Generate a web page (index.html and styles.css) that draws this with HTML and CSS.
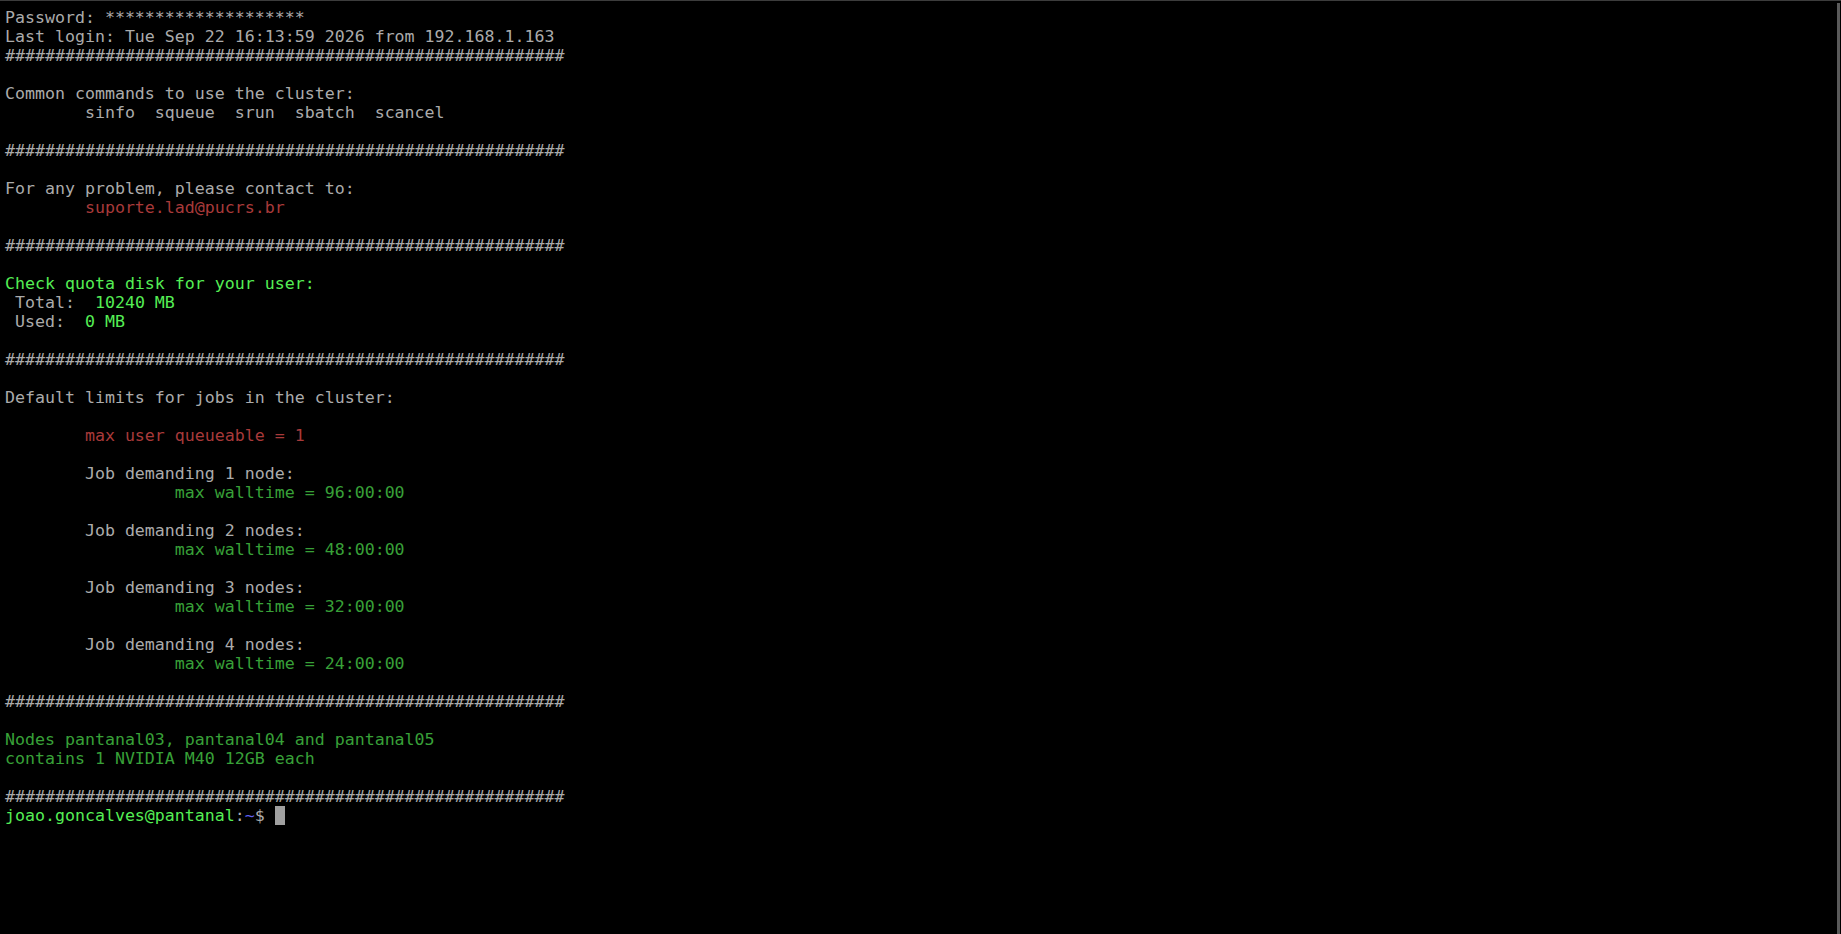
FILE: index.html
```html
<!DOCTYPE html>
<html>
<head>
<meta charset="utf-8">
<link rel="stylesheet" href="styles.css">
</head>
<body>
<div class="window">
<div class="term">
<div class="ln">Password: ********************</div>
<div class="ln">Last login: Tue Sep 22 16:13:59 2026 from 192.168.1.163</div>
<div class="ln">########################################################</div>
<div class="ln"></div>
<div class="ln">Common commands to use the cluster:</div>
<div class="ln">        sinfo  squeue  srun  sbatch  scancel</div>
<div class="ln"></div>
<div class="ln">########################################################</div>
<div class="ln"></div>
<div class="ln">For any problem, please contact to:</div>
<div class="ln red">        suporte.lad@pucrs.br</div>
<div class="ln"></div>
<div class="ln">########################################################</div>
<div class="ln"></div>
<div class="ln bgreen">Check quota disk for your user:</div>
<div class="ln"> Total:  <span class="bgreen">10240 MB</span></div>
<div class="ln"> Used:  <span class="bgreen">0 MB</span></div>
<div class="ln"></div>
<div class="ln">########################################################</div>
<div class="ln"></div>
<div class="ln">Default limits for jobs in the cluster:</div>
<div class="ln"></div>
<div class="ln red">        max user queueable = 1</div>
<div class="ln"></div>
<div class="ln">        Job demanding 1 node:</div>
<div class="ln green">                 max walltime = 96:00:00</div>
<div class="ln"></div>
<div class="ln">        Job demanding 2 nodes:</div>
<div class="ln green">                 max walltime = 48:00:00</div>
<div class="ln"></div>
<div class="ln">        Job demanding 3 nodes:</div>
<div class="ln green">                 max walltime = 32:00:00</div>
<div class="ln"></div>
<div class="ln">        Job demanding 4 nodes:</div>
<div class="ln green">                 max walltime = 24:00:00</div>
<div class="ln"></div>
<div class="ln">########################################################</div>
<div class="ln"></div>
<div class="ln green">Nodes pantanal03, pantanal04 and pantanal05</div>
<div class="ln green">contains 1 NVIDIA M40 12GB each</div>
<div class="ln"></div>
<div class="ln">########################################################</div>
<div class="ln"><span class="bgreen">joao.goncalves@pantanal</span>:<span class="blue">~</span>$ <span class="cursor"></span></div>
</div>
<div class="scrollbar"></div>
</div>
</body>
</html>
```
FILE: styles.css
```css
html, body {
  margin: 0;
  padding: 0;
  background: #000;
}
.window {
  display: flex;
  height: 934px;
  box-sizing: border-box;
  border-top: 1px solid #3c3c3c;
  background: #000;
  overflow: hidden;
}
.term {
  flex: 1;
  padding: 7px 0 0 5px;
  font-family: "DejaVu Sans Mono", monospace;
  font-size: 16.6px;
  line-height: 19px;
  color: #ababab;
}
.ln {
  height: 19px;
  white-space: pre;
}
.red { color: #a83a3a; }
.green { color: #38a038; }
.bgreen { color: #55ee55; }
.blue { color: #6060f0; }
.cursor {
  display: inline-block;
  width: 10px;
  height: 19px;
  vertical-align: top;
  background: #a0a0a0;
}
.scrollbar {
  width: 3px;
  margin: 2px 1px 0 0;
  background: #5a5a5a;
}
```
